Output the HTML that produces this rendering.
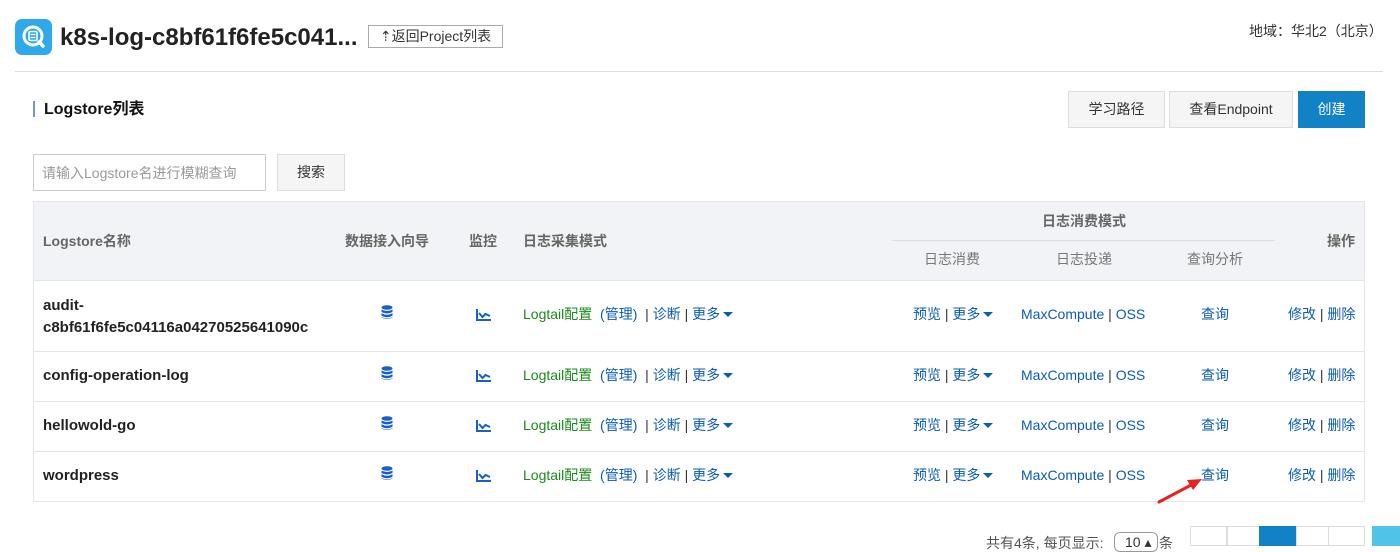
<!DOCTYPE html>
<html><head><meta charset="utf-8"><style>
*{margin:0;padding:0;box-sizing:border-box}
body{width:1400px;height:543px;overflow:hidden;background:#fff;font-family:"Liberation Sans","Noto Sans CJK SC",sans-serif;font-size:14px;color:#333;position:relative}
.a{position:absolute;white-space:nowrap;line-height:18px}
.a span{line-height:18px;vertical-align:top}
.b{color:#0b5cb5}
.g{color:#1b8a1b}
.sep{color:#333}
.btn{position:absolute;background:#f5f5f5;border:1px solid #ddd;text-align:center;font-size:14px;color:#333}
.caret{display:inline-block;width:0;height:0;border-left:5px solid transparent;border-right:5px solid transparent;border-top:5px solid #0b5cb5;vertical-align:middle;margin-left:3px;margin-top:-2px}
.hl{position:absolute;left:33px;width:1332px;height:1px;background:#e3e5e8}
.name{font-weight:bold;color:#222;font-size:15px}
.pg{position:absolute;top:526px;height:20px;border:1px solid #ddd;background:#fff}
</style></head><body>
<div class="a" style="left:15px;top:19px;width:37px;height:36px;background:#2fa9ea;border-radius:7px">
<svg width="37" height="36" viewBox="0 0 37 36"><circle cx="18" cy="17" r="9" fill="none" stroke="#fff" stroke-width="3"/><rect x="14" y="12.5" width="8" height="9" rx="1.5" fill="none" stroke="#fff" stroke-width="1.6"/><line x1="15.5" y1="15.5" x2="20.5" y2="15.5" stroke="#fff" stroke-width="1.3"/><line x1="15.5" y1="18.5" x2="20.5" y2="18.5" stroke="#fff" stroke-width="1.3"/><line x1="24" y1="23" x2="28" y2="27" stroke="#fff" stroke-width="3.5" stroke-linecap="round"/></svg></div>
<div class="a" style="left:60px;top:24px;font-size:24px;line-height:28px;font-weight:bold;color:#222">k8s-log-c8bf61f6fe5c041...</div>
<div class="btn" style="left:368px;top:25px;width:135px;height:23px;background:#fff;border-color:#aaa;line-height:21px;font-size:14px">⇡返回Project列表</div>
<div class="a" style="left:1249px;top:22px;font-size:14px">地域：华北2（北京）</div>
<div class="a" style="left:15px;top:71px;width:1368px;height:1px;background:#ddd"></div>
<div class="a" style="left:33px;top:101px;width:2px;height:16px;background:#6f98c9"></div>
<div class="a" style="left:44px;top:100px;font-size:16px;line-height:20px;color:#111;font-weight:bold">Logstore列表</div>
<div class="btn" style="left:1068px;top:91px;width:97px;height:37px;line-height:35px">学习路径</div>
<div class="btn" style="left:1169px;top:91px;width:124px;height:37px;line-height:35px">查看Endpoint</div>
<div class="btn" style="left:1298px;top:91px;width:67px;height:37px;line-height:35px;background:#1182c6;border-color:#1182c6;color:#fff">创建</div>
<div class="a" style="left:33px;top:154px;width:233px;height:37px;border:1px solid #ccc;color:#999;padding:9px 8px;font-size:14px">请输入Logstore名进行模糊查询</div>
<div class="btn" style="left:277px;top:154px;width:68px;height:37px;line-height:35px">搜索</div>
<div class="a" style="left:33px;top:201px;width:1332px;height:301px;border:1px solid #e3e5e8"></div>
<div class="a" style="left:34px;top:202px;width:1330px;height:78px;background:#f2f3f6"></div>
<div class="hl" style="top:280px"></div>
<div class="hl" style="top:351px"></div>
<div class="hl" style="top:401px"></div>
<div class="hl" style="top:451px"></div>
<div class="a" style="left:892px;top:240px;width:383px;height:1px;background:#dcdee2"></div>
<div class="a" style="left:43px;top:232px;color:#666;font-weight:bold">Logstore名称</div>
<div class="a" style="left:345px;top:232px;color:#666;font-weight:bold">数据接入向导</div>
<div class="a" style="left:469px;top:232px;color:#666;font-weight:bold">监控</div>
<div class="a" style="left:523px;top:232px;color:#666;font-weight:bold">日志采集模式</div>
<div class="a" style="left:1042px;top:212px;color:#666;font-weight:bold">日志消费模式</div>
<div class="a" style="left:1327px;top:232px;color:#666;font-weight:bold">操作</div>
<div class="a" style="left:924px;top:250px;color:#777">日志消费</div>
<div class="a" style="left:1056px;top:250px;color:#777">日志投递</div>
<div class="a" style="left:1187px;top:250px;color:#777">查询分析</div>

<div class="a name" style="left:43px;top:295px;line-height:22px">audit-<br>c8bf61f6fe5c04116a04270525641090c</div>
<div class="a name" style="left:43px;top:367px">config-operation-log</div>
<div class="a name" style="left:43px;top:417px">hellowold-go</div>
<div class="a name" style="left:43px;top:467px">wordpress</div>

<!-- row 1 -->
<div class="a" style="left:381px;top:305px"><svg width="12" height="15" viewBox="0 0 12 15"><g fill="#1a5fc4"><ellipse cx="6" cy="2.5" rx="5.5" ry="2.3"/><path d="M0.5 4.5q5.5 3 11 0v2.5q-5.5 3-11 0z"/><path d="M0.5 8.3q5.5 3 11 0v2.5q-5.5 3-11 0z"/><path d="M0.5 12q5.5 3 11 0v.5q-5.5 3-11 0z"/></g></svg></div>
<div class="a" style="left:476px;top:307px"><svg width="15" height="12" viewBox="0 0 15 12"><path d="M1 0v11h14" fill="none" stroke="#1a5fc4" stroke-width="2"/><path d="M3 4l3.5 4 3-3 4.5 2" fill="none" stroke="#1a5fc4" stroke-width="2"/></svg></div>
<div class="a" style="left:523px;top:305px"><span class="g">Logtail配置</span>&nbsp; <span class="b">(管理)</span> &nbsp;<span class="sep">|</span> <span class="b">诊断</span> <span class="sep">|</span> <span class="b">更多<i class="caret"></i></span></div>
<div class="a" style="left:913px;top:305px"><span class="b">预览</span> <span class="sep">|</span> <span class="b">更多<i class="caret"></i></span></div>
<div class="a" style="left:1021px;top:305px"><span class="b">MaxCompute</span> <span class="sep">|</span> <span class="b">OSS</span></div>
<div class="a b" style="left:1201px;top:305px">查询</div>
<div class="a" style="left:1288px;top:305px"><span class="b">修改</span> <span class="sep">|</span> <span class="b">删除</span></div>
<!-- row 2 -->
<div class="a" style="left:381px;top:366px"><svg width="12" height="15" viewBox="0 0 12 15"><g fill="#1a5fc4"><ellipse cx="6" cy="2.5" rx="5.5" ry="2.3"/><path d="M0.5 4.5q5.5 3 11 0v2.5q-5.5 3-11 0z"/><path d="M0.5 8.3q5.5 3 11 0v2.5q-5.5 3-11 0z"/><path d="M0.5 12q5.5 3 11 0v.5q-5.5 3-11 0z"/></g></svg></div>
<div class="a" style="left:476px;top:368px"><svg width="15" height="12" viewBox="0 0 15 12"><path d="M1 0v11h14" fill="none" stroke="#1a5fc4" stroke-width="2"/><path d="M3 4l3.5 4 3-3 4.5 2" fill="none" stroke="#1a5fc4" stroke-width="2"/></svg></div>
<div class="a" style="left:523px;top:366px"><span class="g">Logtail配置</span>&nbsp; <span class="b">(管理)</span> &nbsp;<span class="sep">|</span> <span class="b">诊断</span> <span class="sep">|</span> <span class="b">更多<i class="caret"></i></span></div>
<div class="a" style="left:913px;top:366px"><span class="b">预览</span> <span class="sep">|</span> <span class="b">更多<i class="caret"></i></span></div>
<div class="a" style="left:1021px;top:366px"><span class="b">MaxCompute</span> <span class="sep">|</span> <span class="b">OSS</span></div>
<div class="a b" style="left:1201px;top:366px">查询</div>
<div class="a" style="left:1288px;top:366px"><span class="b">修改</span> <span class="sep">|</span> <span class="b">删除</span></div>
<!-- row 3 -->
<div class="a" style="left:381px;top:416px"><svg width="12" height="15" viewBox="0 0 12 15"><g fill="#1a5fc4"><ellipse cx="6" cy="2.5" rx="5.5" ry="2.3"/><path d="M0.5 4.5q5.5 3 11 0v2.5q-5.5 3-11 0z"/><path d="M0.5 8.3q5.5 3 11 0v2.5q-5.5 3-11 0z"/><path d="M0.5 12q5.5 3 11 0v.5q-5.5 3-11 0z"/></g></svg></div>
<div class="a" style="left:476px;top:418px"><svg width="15" height="12" viewBox="0 0 15 12"><path d="M1 0v11h14" fill="none" stroke="#1a5fc4" stroke-width="2"/><path d="M3 4l3.5 4 3-3 4.5 2" fill="none" stroke="#1a5fc4" stroke-width="2"/></svg></div>
<div class="a" style="left:523px;top:416px"><span class="g">Logtail配置</span>&nbsp; <span class="b">(管理)</span> &nbsp;<span class="sep">|</span> <span class="b">诊断</span> <span class="sep">|</span> <span class="b">更多<i class="caret"></i></span></div>
<div class="a" style="left:913px;top:416px"><span class="b">预览</span> <span class="sep">|</span> <span class="b">更多<i class="caret"></i></span></div>
<div class="a" style="left:1021px;top:416px"><span class="b">MaxCompute</span> <span class="sep">|</span> <span class="b">OSS</span></div>
<div class="a b" style="left:1201px;top:416px">查询</div>
<div class="a" style="left:1288px;top:416px"><span class="b">修改</span> <span class="sep">|</span> <span class="b">删除</span></div>
<!-- row 4 -->
<div class="a" style="left:381px;top:466px"><svg width="12" height="15" viewBox="0 0 12 15"><g fill="#1a5fc4"><ellipse cx="6" cy="2.5" rx="5.5" ry="2.3"/><path d="M0.5 4.5q5.5 3 11 0v2.5q-5.5 3-11 0z"/><path d="M0.5 8.3q5.5 3 11 0v2.5q-5.5 3-11 0z"/><path d="M0.5 12q5.5 3 11 0v.5q-5.5 3-11 0z"/></g></svg></div>
<div class="a" style="left:476px;top:468px"><svg width="15" height="12" viewBox="0 0 15 12"><path d="M1 0v11h14" fill="none" stroke="#1a5fc4" stroke-width="2"/><path d="M3 4l3.5 4 3-3 4.5 2" fill="none" stroke="#1a5fc4" stroke-width="2"/></svg></div>
<div class="a" style="left:523px;top:466px"><span class="g">Logtail配置</span>&nbsp; <span class="b">(管理)</span> &nbsp;<span class="sep">|</span> <span class="b">诊断</span> <span class="sep">|</span> <span class="b">更多<i class="caret"></i></span></div>
<div class="a" style="left:913px;top:466px"><span class="b">预览</span> <span class="sep">|</span> <span class="b">更多<i class="caret"></i></span></div>
<div class="a" style="left:1021px;top:466px"><span class="b">MaxCompute</span> <span class="sep">|</span> <span class="b">OSS</span></div>
<div class="a b" style="left:1201px;top:466px">查询</div>
<div class="a" style="left:1288px;top:466px"><span class="b">修改</span> <span class="sep">|</span> <span class="b">删除</span></div>

<svg class="a" style="left:1155px;top:476px" width="50" height="30" viewBox="0 0 50 30"><line x1="4" y1="26" x2="38" y2="8" stroke="#e8231f" stroke-width="3" stroke-linecap="round"/><polygon points="47,3 32,4 38,14" fill="#e8231f"/></svg>

<div class="a" style="left:986px;top:534px;color:#555">共有4条, 每页显示:</div>
<div class="a" style="left:1114px;top:532px;width:44px;height:20px;border:1px solid #999;border-radius:6px;padding-left:10px;font-size:14px">10 ▴</div>
<div class="a" style="left:1159px;top:534px;color:#555">条</div>
<div class="pg" style="left:1190px;width:37px"></div>
<div class="pg" style="left:1227px;width:33px"></div>
<div class="pg" style="left:1259px;width:37px;background:#1182c6;border-color:#1182c6"></div>
<div class="pg" style="left:1296px;width:33px"></div>
<div class="pg" style="left:1328px;width:37px"></div>
<div class="a" style="left:1372px;top:526px;width:28px;height:20px;background:#4fc3e8"></div>
</body></html>
